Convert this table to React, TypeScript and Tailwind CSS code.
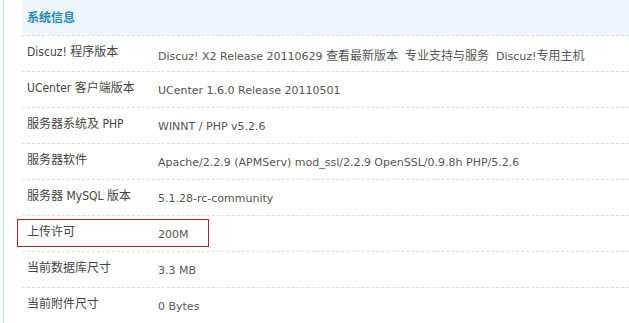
const cjk = "text-[12px]";

const rows: { label: string; value: React.ReactNode }[] = [
  {
    label: "Discuz! 程序版本",
    value: (
      <>
        Discuz! X2 Release 20110629 <span className={cjk}>查看最新版本</span>
        &nbsp;&nbsp;<span className={cjk}>专业支持与服务</span>&nbsp;&nbsp;Discuz!
        <span className={cjk}>专用主机</span>
      </>
    ),
  },
  { label: "UCenter 客户端版本", value: "UCenter 1.6.0 Release 20110501" },
  { label: "服务器系统及 PHP", value: "WINNT / PHP v5.2.6" },
  {
    label: "服务器软件",
    value: "Apache/2.2.9 (APMServ) mod_ssl/2.2.9 OpenSSL/0.9.8h PHP/5.2.6",
  },
  { label: "服务器 MySQL 版本", value: "5.1.28-rc-community" },
  { label: "上传许可", value: "200M" },
  { label: "当前数据库尺寸", value: "3.3 MB" },
  { label: "当前附件尺寸", value: "0 Bytes" },
];

const labelFont =
  "font-['DejaVu_Sans_Condensed','Liberation_Sans','Noto_Sans_CJK_SC',sans-serif]";
const valueFont = "font-['DejaVu_Sans','Noto_Sans_CJK_SC',sans-serif]";

export default function App() {
  return (
    <div className="h-[323px] w-[629px] overflow-hidden bg-white pl-[3px]">
      <div className="relative h-full border-l border-[#b5dbe9] pl-[18px]">
        <div className="flex h-[35px] items-center rounded-bl-[5px] bg-[#eef5fd] pl-[5px]">
          <span
            className={`text-[12px] font-bold text-[#1d89b8] ${labelFont}`}
          >
            系统信息
          </span>
        </div>
        {rows.map((row) => (
          <div
            key={row.label}
            className="flex h-[36px] border-t border-dashed border-[#d9dee3]"
          >
            <div
              className={`w-[136px] shrink-0 whitespace-pre pl-[5px] pt-[7px] text-[12px] text-[#444] ${labelFont}`}
            >
              {row.label}
            </div>
            <div
              className={`whitespace-nowrap pt-[11px] text-[11px] text-[#555] ${valueFont}`}
            >
              {row.value}
            </div>
          </div>
        ))}
        {/* highlight around the upload limit row */}
        <div className="absolute left-[13px] top-[219px] h-[28px] w-[192px] border border-[#a3262e]" />
      </div>
    </div>
  );
}
